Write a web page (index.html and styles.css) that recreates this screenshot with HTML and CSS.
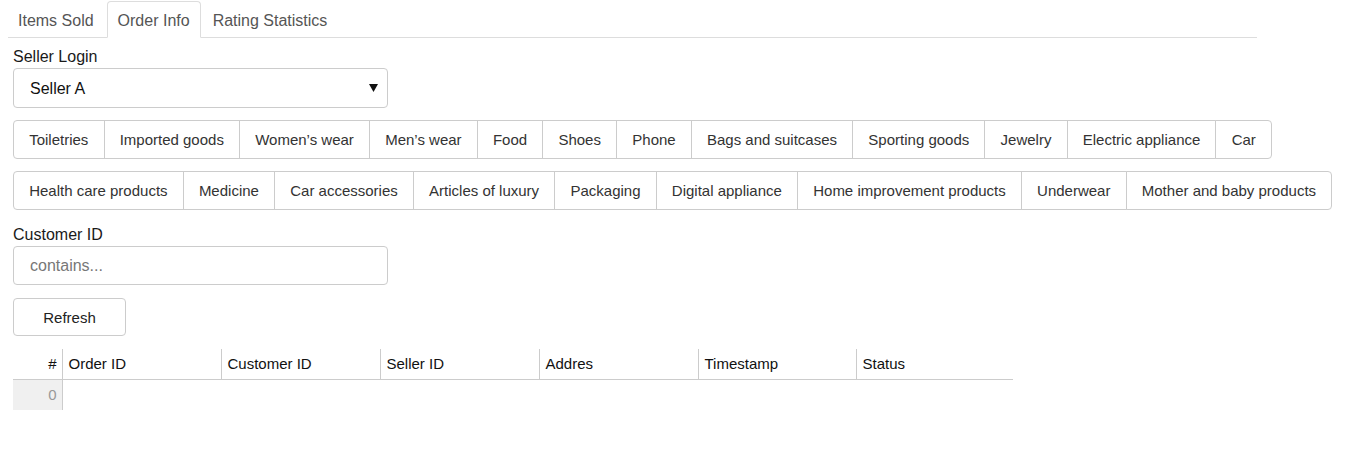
FILE: index.html
```html
<!DOCTYPE html>
<html lang="en">
<head>
<meta charset="utf-8">
<title>Order Info</title>
<link rel="stylesheet" href="styles.css">
</head>
<body>
<div class="page">
  <ul class="tabs">
    <li class="tab">Items Sold</li>
    <li class="tab active">Order Info</li>
    <li class="tab">Rating Statistics</li>
  </ul>
  <div class="content">
    <label class="label">Seller Login</label>
    <div class="select-wrap">
      <select class="select">
        <option>Seller A</option>
      </select>
      <svg class="caret" width="9" height="8" viewBox="0 0 9 8"><path d="M0 0 H9 L4.5 8 Z" fill="#111"/></svg>
    </div>

    <div class="btn-group first">
      <button class="btn">Toiletries</button><button class="btn">Imported goods</button><button class="btn">Women’s wear</button><button class="btn">Men’s wear</button><button class="btn">Food</button><button class="btn">Shoes</button><button class="btn">Phone</button><button class="btn">Bags and suitcases</button><button class="btn">Sporting goods</button><button class="btn">Jewelry</button><button class="btn">Electric appliance</button><button class="btn">Car</button>
    </div>
    <div class="btn-group">
      <button class="btn">Health care products</button><button class="btn">Medicine</button><button class="btn">Car accessories</button><button class="btn">Articles of luxury</button><button class="btn">Packaging</button><button class="btn">Digital appliance</button><button class="btn">Home improvement products</button><button class="btn">Underwear</button><button class="btn">Mother and baby products</button>
    </div>

    <label class="label label-cust">Customer ID</label>
    <input class="input" type="text" placeholder="contains...">

    <button class="refresh">Refresh</button>

    <table class="grid">
      <colgroup>
        <col class="c-idx"><col class="c159"><col class="c159"><col class="c159"><col class="c159"><col class="c158"><col class="c157">
      </colgroup>
      <thead>
        <tr>
          <th class="idx">#</th>
          <th>Order ID</th>
          <th>Customer ID</th>
          <th>Seller ID</th>
          <th>Addres</th>
          <th>Timestamp</th>
          <th>Status</th>
        </tr>
      </thead>
      <tbody>
        <tr>
          <td class="idx">0</td>
          <td></td><td></td><td></td><td></td><td></td><td></td>
        </tr>
      </tbody>
    </table>
  </div>
</div>
</body>
</html>
```

FILE: styles.css
```css
* { box-sizing: border-box; }

html, body {
  margin: 0;
  padding: 0;
  background: #fff;
  font-family: "Liberation Sans", Arial, sans-serif;
  color: #222;
}

.page {
  padding: 1px 0 0 8px;
}

.tabs {
  list-style: none;
  margin: 0;
  padding: 0;
  width: 1249px;
  display: flex;
  border-bottom: 1px solid #ddd;
}

.tab {
  font-size: 16px;
  line-height: 20px;
  padding: 9px 10px 6px 9px;
  margin-right: 2px;
  margin-bottom: -1px;
  border: 1px solid transparent;
  border-radius: 4px 4px 0 0;
  color: #555;
}

.tab.active {
  padding-left: 10px;
  border-color: #ddd;
  border-bottom-color: #fff;
  background: #fff;
}

.content {
  padding: 9px 0 0 5px;
}

.label {
  display: block;
  font-size: 16px;
  line-height: 20px;
  color: #1a1a1a;
  margin-bottom: 1px;
}

.select-wrap {
  position: relative;
  width: 375px;
}

.select {
  display: block;
  width: 375px;
  height: 40px;
  appearance: none;
  -webkit-appearance: none;
  border: 1px solid #ccc;
  border-radius: 4px;
  background: #fff;
  font-family: inherit;
  font-size: 16px;
  color: #111;
  padding: 0 16px;
}

.caret {
  position: absolute;
  right: 10px;
  top: 16px;
}

.btn-group {
  display: flex;
  margin-top: 12px;
}

.btn {
  font-family: inherit;
  font-size: 15px;
  line-height: 21px;
  padding: 8px 15.17px;
  border: 1px solid #ccc;
  background: #fff;
  color: #333;
  margin: 0 0 0 -1px;
  border-radius: 0;
  white-space: nowrap;
}

.btn:first-child {
  margin-left: 0;
  border-radius: 4px 0 0 4px;
}

.btn:last-child {
  border-radius: 0 4px 4px 0;
}

.label-cust {
  margin-top: 15px;
}

.input {
  display: block;
  width: 375px;
  height: 39px;
  margin-top: 1px;
  border: 1px solid #ccc;
  border-radius: 4px;
  font-family: inherit;
  font-size: 16px;
  padding: 0 16px;
  color: #333;
}

.input::placeholder {
  color: #777;
}

.refresh {
  display: block;
  margin-top: 13px;
  width: 113px;
  height: 38px;
  border: 1px solid #ccc;
  border-radius: 4px;
  background: #fff;
  font-family: inherit;
  font-size: 15px;
  color: #222;
}

.grid {
  margin-top: 13px;
  border-collapse: collapse;
  table-layout: fixed;
  width: 1000px;
  font-size: 15px;
}

.c-idx { width: 49px; }
.c159 { width: 159px; }
.c158 { width: 158px; }
.c157 { width: 157px; }

.grid th {
  height: 30px;
  padding: 0 6px;
  text-align: left;
  font-weight: normal;
  color: #111;
  border-left: 1px solid #ccc;
  border-bottom: 1px solid #ccc;
  white-space: nowrap;
}

.grid th.idx {
  border-left: none;
  text-align: right;
  padding-right: 5px;
}

.grid td {
  height: 31px;
  padding: 0 5px;
}

.grid td.idx {
  background: #f0f0f0;
  color: #999;
  text-align: right;
  border-right: 1px solid #ccc;
}
```
